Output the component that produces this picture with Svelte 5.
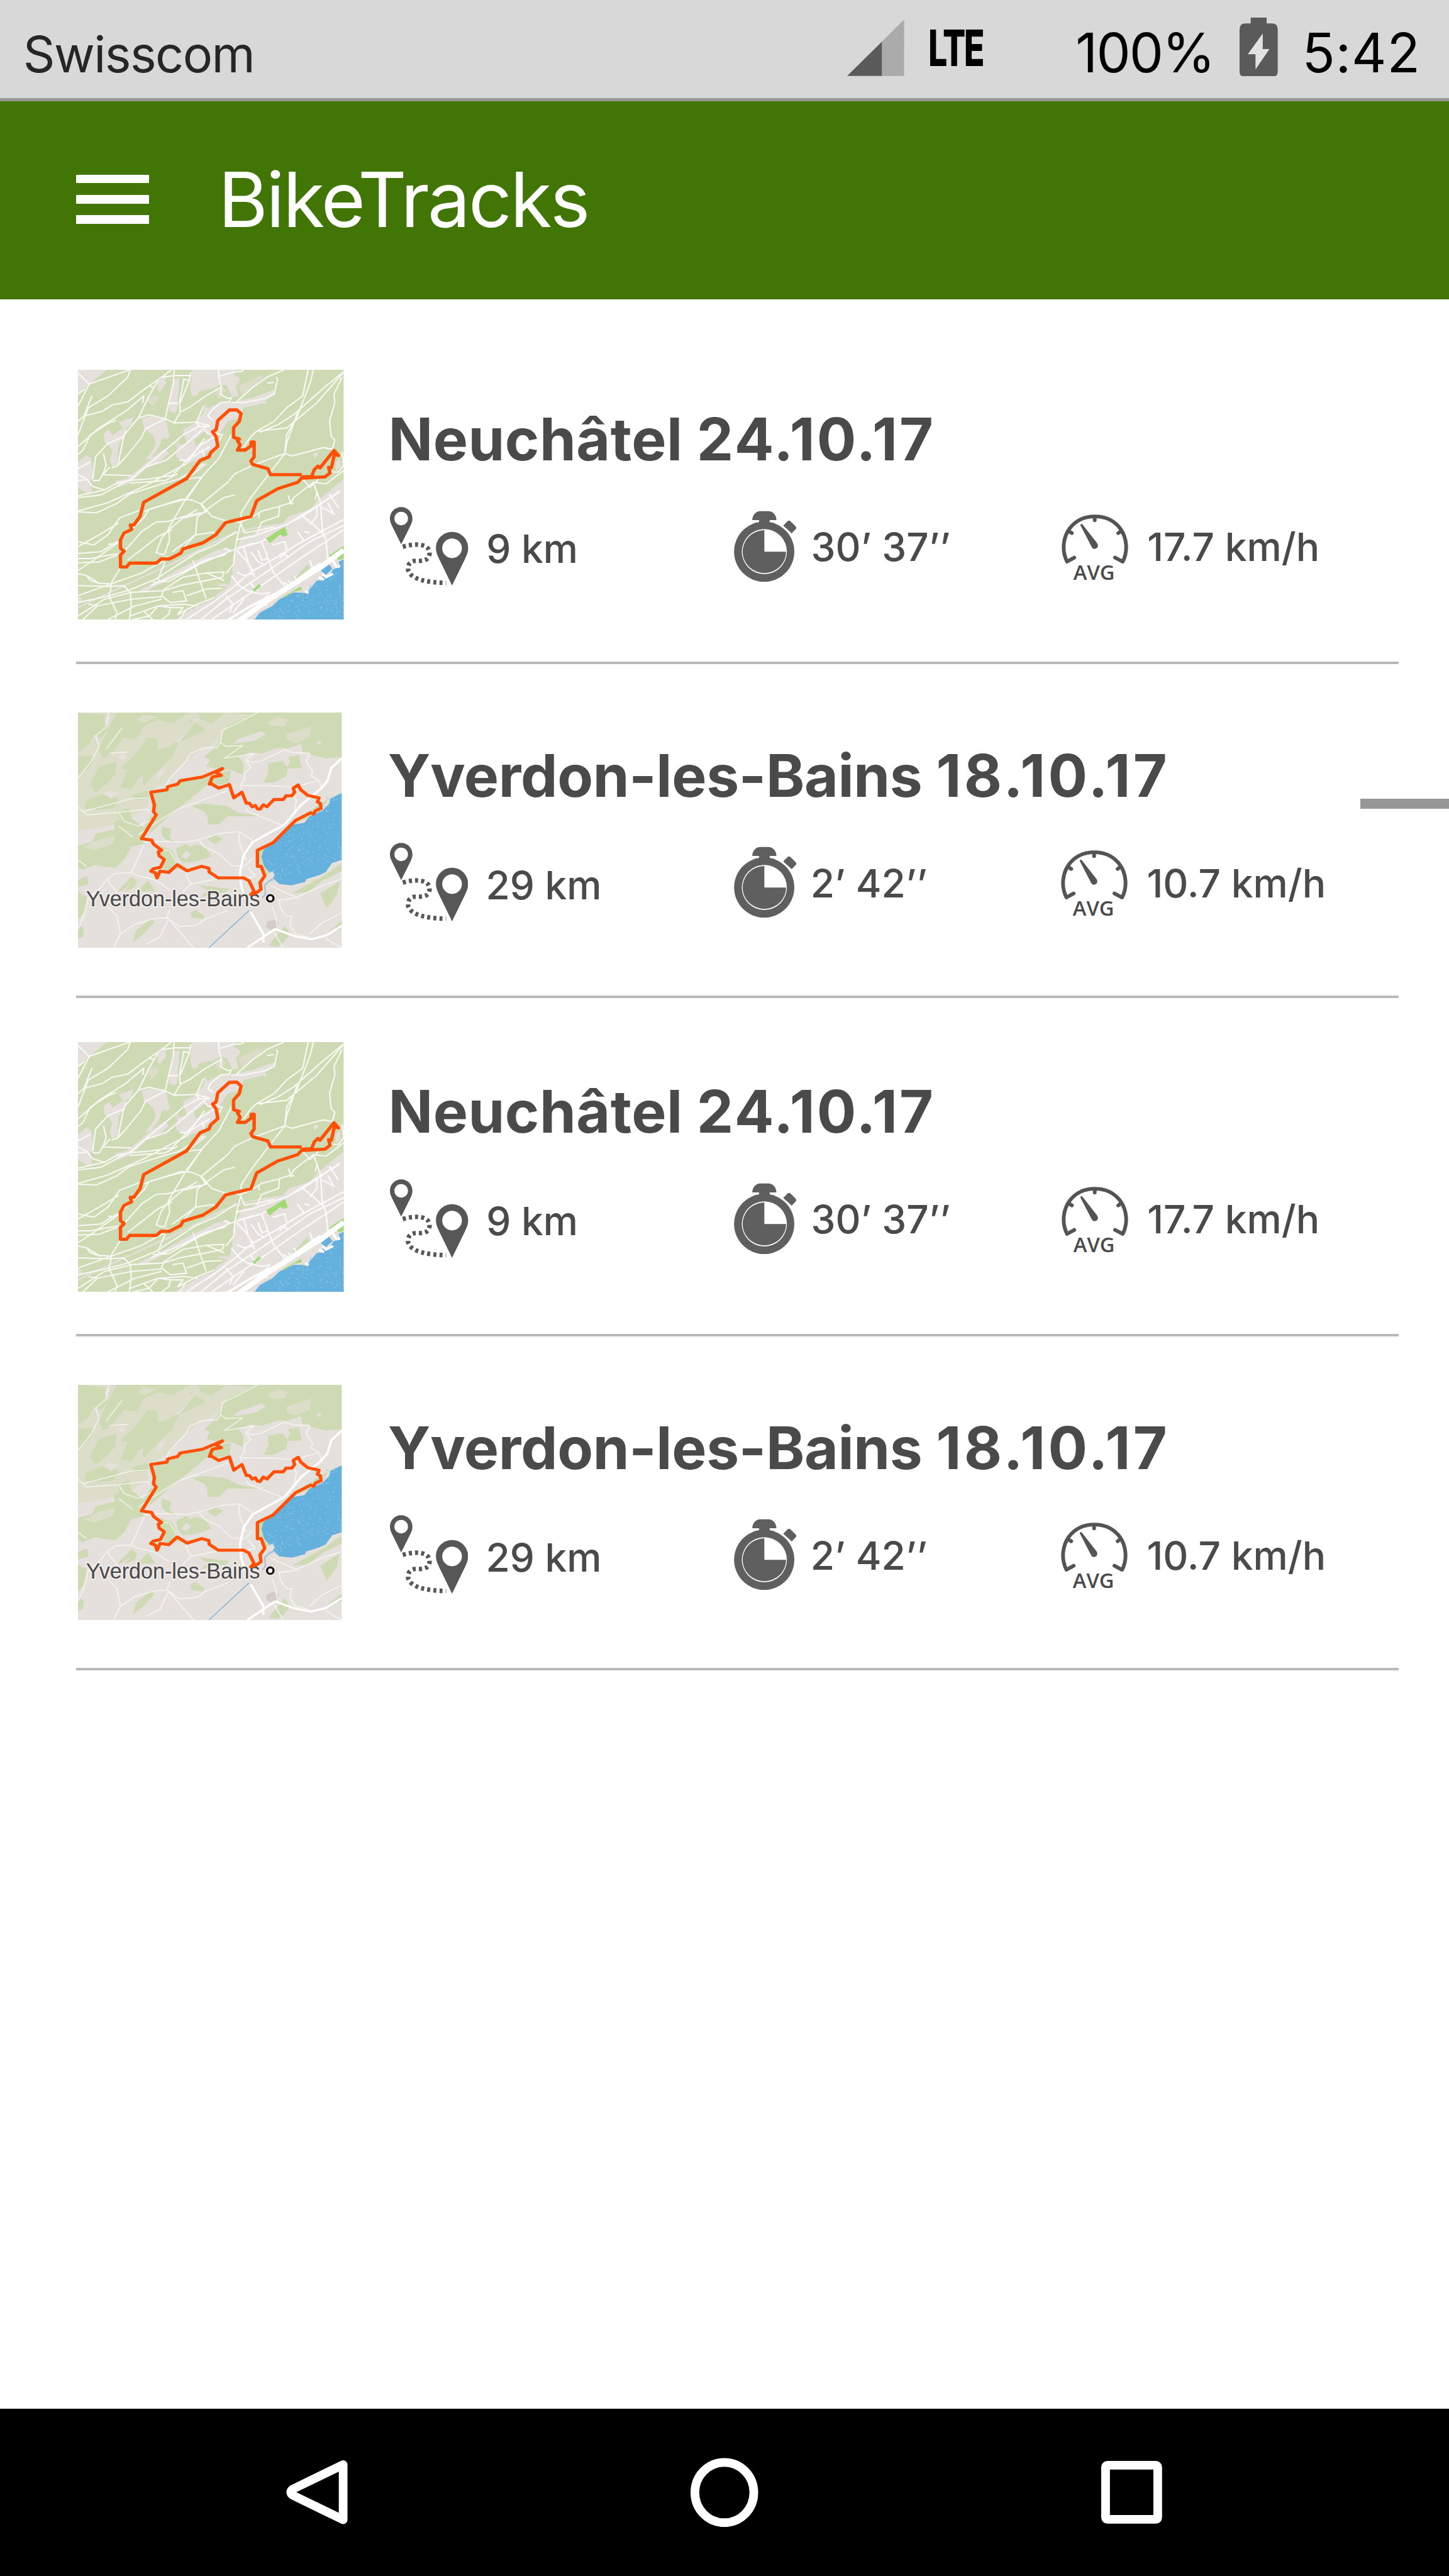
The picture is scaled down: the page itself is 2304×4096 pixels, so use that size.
<script>
  const neuchatel = { place: 'Neuchâtel', date: '24.10.17', distance: '9 km', time: '30’ 37’’', speed: '17.7 km/h', map: 'hills' };
  const yverdon = { place: 'Yverdon-les-Bains', date: '18.10.17', distance: '29 km', time: '2’ 42’’', speed: '10.7 km/h', map: 'lake' };
  const tracks = [neuchatel, yverdon, neuchatel, yverdon];

  // Light speckles scattered over the lakes
  const noise = (i) => {
    const v = Math.sin(i * 127.1 + 11.7) * 43758.5453;
    return v - Math.floor(v);
  };
  const specks = (x0, y0, w, h, n) =>
    Array.from({ length: n }, (_, i) => ({ x: x0 + noise(i) * w, y: y0 + noise(i + 500) * h }));
  const bay = specks(1040, 1170, 480, 350, 220);
  const lake = specks(1060, 560, 450, 560, 300);
</script>

{#snippet hillsMap()}
  <svg class="map" viewBox="32 46 1487 1474" preserveAspectRatio="none" aria-hidden="true">
    <rect x="32" y="46" width="1487" height="1474" fill="#cddab3" />
    <g fill="#e5e0dc">
      <path d="M32 46H195L95 130 32 190Z" />
      <path d="M672 46H915L905 75 940 95 930 130 915 135 932 205 895 205 865 140 830 130 800 150 705 175 700 200 670 200 660 150Z" />
      <path d="M575 95 600 100 585 290 570 300 540 290 548 200Z" />
      <path d="M745 235 755 275 830 240 900 235 1010 210 1130 165 1140 185 1080 225 1090 250 1060 245 960 270 940 330 870 350 820 430 800 500 700 580 640 600 580 560 590 490 640 480 620 400 690 360 735 300Z" />
      <path d="M390 335 440 320 525 340 545 440 500 470 480 510 440 570 405 580 450 520 470 480 450 430 400 390Z" />
      <path d="M262 355 340 325 330 370 290 400 290 440 260 480 250 600 225 620 210 580 225 520 180 470 175 425 205 400 225 435 262 405 285 390Z" />
      <path d="M32 590 80 548 108 570 118 690 100 700 110 765 90 780 32 740Z" />
      <path d="M520 510 540 540 500 580 420 620 350 690 320 715 255 740 245 700 300 690 350 650 440 570Z" />
      <path d="M1519 690 1440 760 1370 820 1330 870 1210 910 1180 950 1090 965 1000 1020 950 1030 900 1150 895 1260 880 1310 820 1310 800 1400 700 1440 580 1520H1519Z" />
      <path d="M860 1095 885 1110 840 1140 740 1185 600 1250 440 1340 400 1360 370 1350 500 1280 620 1210 790 1120Z" />
      <path d="M32 1385 55 1390 50 1420 32 1425ZM480 110 520 90 525 130 490 175 475 160ZM1345 550l20-20 12 15-18 22ZM1475 590 1500 570 1500 620 1475 645Z" />
    </g>
    <g fill="#dcdcc8">
      <path d="M930 140 1050 80 1070 90 1010 155 950 200ZM420 215 470 195 485 220 450 260 425 240ZM800 170l40-30 20 30-40 50Z" />
      <path d="M570 480 600 455 590 510Z" />
    </g>
    <g fill="#cddab3">
      <path d="M682 460 740 410 775 440 690 500ZM495 465 515 440 525 470 505 485ZM1235 1290 1320 1190 1330 1225 1270 1290ZM820 1320 870 1330 780 1390 700 1440 640 1430Z" />
    </g>
    <path fill="none" stroke="#e5e0dc" stroke-width="9" d="M32 1450 230 1350 560 1190 860 1030 1000 985 1100 965" />
    <path fill="#64b1de" d="M1519 1165 1490 1180 1500 1205 1460 1225 1440 1262 1400 1265 1405 1290 1370 1290 1325 1345 1320 1365 1240 1360 1160 1400 1120 1440 1050 1480 1020 1520H1519ZM1392 1232 1438 1195 1457 1220 1420 1256Z" />
    {#each bay as p}
      {#if p.x + p.y * 1.25 > 2980}<circle cx={p.x} cy={p.y} r="3.5" fill="#8cc5e8" />{/if}
    {/each}
    <g class="roads" stroke-width="8">
      <path d="M32 65 95 130 320 46M95 130 32 260M32 190 70 160M325 46 310 90 200 200 90 270 32 430" />
      <path d="M32 350 65 320 170 290 220 255 310 235 430 140 500 90 575 80 665 80M65 320 110 200M32 545 60 520 100 430 205 360 245 345M430 140 455 150M480 110 430 200 370 330 290 430 255 610 220 625M555 46 500 90" />
      <path d="M32 500 150 390 300 290 400 200 395 240M32 630 100 590M570 46 565 130 540 240 520 335 570 360 690 355 765 375M540 243H592M625 100 600 240 605 295 570 360M665 60 655 110 605 240M605 295 660 265 740 205 830 150M655 110 620 100" />
      <path d="M820 46 820 90 835 150 830 190 870 215 890 210 880 235 830 240 775 290 760 320 790 345M820 85 900 60 950 55 960 46M890 240 960 240 1080 215 1130 190 1150 100 1140 90M920 235 1010 150 1090 90 1185 46M1090 125 1130 120" />
      <path d="M370 330 430 312 520 335 410 395 385 450 300 560 255 610 240 620M300 400 290 440 200 480 130 560 115 690M175 540 190 610 170 665 330 670M170 665 210 620" />
      <path d="M32 665 80 690 115 735 180 755 32 790M115 700 150 700 170 665M32 700 75 695M180 755 250 715 320 700 410 620 525 580 640 480 750 380" />
      <path d="M32 885 135 890 250 835 320 780 500 720 600 690 735 600M32 800 160 785 310 700 430 690 560 670 640 580 770 500M320 715 520 700 590 660M32 880 200 830 400 735 640 600 740 450" />
      <path d="M735 260 695 355 710 380 620 430 500 540 430 600 320 700M710 380 770 380M740 400 760 425 785 420M780 420 840 430 820 470M890 430 820 570 740 660 640 800 540 980 545 1050 515 1140 470 1125 500 1040 540 990" />
      <path d="M725 510 740 560M600 580 640 580 720 490 800 440M400 830 640 690 750 600M400 885 430 870 560 830 640 810 725 680 640 690" />
      <path d="M1519 60 1370 240 1200 390 1030 410 1000 440 960 500M1030 410 1130 350 1200 270 1290 200 1310 100 1320 46M1350 46 1330 130 1270 290 1260 320 1200 430 1190 540 1110 570 1000 615 910 660 870 710 720 840M1515 60 1400 160 1240 310 1150 370 1050 415" />
      <path d="M1510 90 1465 190 1470 240 1440 350 1450 440 1470 460 1455 515 1405 505 1230 555 1190 540 1080 690 1000 800 945 890 945 940M1190 540 1200 480 1260 300" />
      <path d="M1510 530 1519 610 1490 650 1450 650M1519 640 1420 720 1350 710 1240 800 1225 830 1150 855 1060 880 1000 920 940 945 850 935 780 910 725 840 670 815 610 810 430 870 400 920 250 1070 120 1170 32 1230" />
      <path d="M1290 690 1330 740 1380 690M1350 710 1370 770 1360 810M1210 790 1225 840 1240 830M1160 855 1155 910 1060 945 1035 1010M1045 890 1045 920M910 785 850 800 780 850 700 915 690 1020 560 1120" />
      <path d="M32 1060 120 1080 200 1020 265 920 390 870M32 1090 150 1020 260 950M32 1130 160 1120 250 1060M32 1160 100 1160 260 1130M720 840 750 885 630 920M32 1185 150 1180 250 1140M200 1075 245 1075M540 990 620 920 700 870" />
      <path d="M280 1130 390 1000 470 945 540 940 630 910 720 890M310 1170 480 1030 560 990M690 1020 790 1005 800 1020M690 1020 610 1110M945 945 925 1030 910 1110 905 1190 860 1250M940 945 965 1010 1060 990 1130 975" />
      <path d="M270 1215 220 1300 215 1345 205 1380 250 1480 240 1520M32 1250 80 1260 150 1305 220 1310M80 1260 100 1290 160 1310M32 1320 215 1325 290 1320 325 1360 330 1430 320 1520M32 1420 205 1380 310 1350 470 1280 690 1130 800 1080 920 1000M32 1380 215 1310 380 1250 520 1170 530 1145" />
      <path d="M675 1170 750 1400M440 1320 620 1240 740 1170 850 1140 880 1110 850 1100M490 1290 480 1280 520 1180M450 1300 540 1295 720 1190 920 1100 1015 1070M510 1345 620 1270 750 1245 850 1240 840 1270 750 1290 600 1320 510 1350 500 1380 550 1420 640 1410 620 1350 560 1360M640 1380 750 1340 840 1335" />
      <path d="M32 1500 180 1400 330 1360 510 1350M60 1520 140 1440 330 1400 500 1385M140 1440 90 1430M200 1520 350 1440 500 1400M320 1500 480 1440 620 1430 700 1440M340 1520 430 1500 480 1440 550 1450 540 1490 500 1520M400 1470 450 1520M550 1450 620 1450 590 1490 700 1430 800 1390M600 1520 640 1460M750 1245 850 1290" />
    </g>
    <g class="roads" stroke-width="9">
      <path d="M640 1520 800 1410 900 1330 1000 1240 1150 1150 1270 1070 1519 930M720 1520 860 1400 960 1330 1100 1230 1330 1060 1519 965M780 1520 920 1420 1100 1290 1290 1150 1420 1060 1519 990" />
      <path d="M915 1050 1010 1030 1090 1000 1200 960 1290 900 1370 850 1500 760M930 1100 960 1090 1060 1060 1085 1045M1205 955 1290 910 1430 810 1495 770M920 1110 980 1180 1010 1240 1020 1270M960 1090 985 1190 1010 1230M1060 1060 1125 1240 1200 1340M890 1260 935 1320 980 1350 1060 1370 1110 1360" />
      <path d="M1370 770 1390 830 1400 1000 1420 1050 1430 1160M1290 910 1350 960 1400 1010M1370 850 1370 910 1330 960M1000 1120 1040 1180 1080 1200M1040 1110 1060 1170 1100 1160M1120 1080 1190 1060 1200 1110M1160 1130 1220 1150M1160 1160 1200 1120M1260 1000 1300 1060M1300 1000 1330 1010M860 1380 900 1430 880 1480M920 1240 960 1260 1010 1250M990 1300 1040 1350M1180 1300 1230 1330M1210 1290 1240 1320M1240 1260 1270 1310M1040 1430 1100 1370M900 1480 960 1400M1400 860 1470 900M1430 830 1460 890M1440 780 1490 860M1330 1170 1350 1230M1060 1410 1090 1440" />
    </g>
    <path fill="#a3d977" d="M1085 1040 1190 972 1207 1022 1180 1030 1165 1018 1105 1070ZM1010 1345 1045 1310 1057 1322 1018 1357ZM1440 1140 1519 1085V1160L1490 1170 1475 1150 1440 1150ZM1180 1385 1280 1325 1285 1345 1240 1355 1190 1390ZM1062 1405l14-8 6 9-14 8Z" />
    <g class="roads strong">
      <path stroke-width="30" d="M930 1530 1090 1410 1240 1310 1390 1210 1519 1110" />
      <path stroke-width="14" d="M860 1530 1000 1440 1190 1340 1330 1230 1390 1190M1400 1250 1420 1270 1460 1250M1305 1350 1320 1365M1380 1270 1410 1285M1450 1160 1480 1210 1500 1205" />
    </g>
    <path class="route" stroke-width="19" d="M1285 665H1110L1095 630 1010 605 1000 585 1018 560V472H1002L1000 495 968 520H925L940 490 925 465 935 455 903 445V388L935 350 945 305 922 283H880L815 345 805 400 785 412 805 440 815 497 775 535 765 560 715 582 640 688 400 828 380 910 345 962H325L332 988 290 1010 270 1050V1100L290 1117 270 1140V1210H303L322 1187H470L497 1163H543L608 1128 620 1103 730 1068 803 1020 858 948 1000 912 1033 818 1150 748 1262 710 1290 678 1340 675 1355 635 1375 615 1387 625 1465 522 1490 552 1468 545 1450 625 1435 622 1443 655 1415 678 1290 685" />
  </svg>
{/snippet}

{#snippet lakeMap()}
  <svg class="map" viewBox="32 45 1477 1461" preserveAspectRatio="none" aria-hidden="true">
    <rect x="32" y="45" width="1477" height="1461" fill="#e5e0dc" />
    <path fill="#dcdec9" d="M32 45H1100L900 130 800 230 700 290 600 380 540 470 440 530 420 640 300 720 150 760 32 780Z" />
    <g fill="#cddab3">
      <path d="M880 45H1509V320L1420 330 1290 290 1280 240 1200 270 1150 265 1060 300 1000 290 930 320 960 360 955 430 890 400 830 400 750 380 770 340 740 320 800 260 830 200 870 130 1000 60Z" />
      <path d="M32 45 180 60 200 150 160 200 120 180 90 250 32 290ZM250 45H660L560 110 480 90 400 130 360 210 290 200 220 300 170 330 150 270 190 170ZM660 90 750 150 680 190 600 230 560 320 470 420 400 500 380 440 330 520 270 510 310 400 270 390 350 310 420 200 520 210 620 160ZM32 320 120 310 110 370 60 420 32 440ZM150 380 250 350 240 430 180 500 130 540 100 490ZM80 590 190 540 260 580 230 640 130 650 70 640ZM330 560 420 530 430 580 360 590ZM250 660 320 640 330 700 270 720ZM700 45 860 50 780 110 720 90Z" />
      <path d="M230 730 320 690 400 760 430 700 450 680 440 760 390 830 400 860 330 880 290 960 240 1010 170 1000 130 990 60 1020 32 1010V870L110 850 130 800 240 770Z" />
      <path d="M770 480 640 600 540 690 430 800 460 700 450 640 440 540 530 520 610 470 740 450 770 440 890 400 880 480 800 500Z" />
      <path d="M670 625 740 610 860 625 930 665 1050 690 870 690 820 740 760 740 755 690 740 660ZM500 750 555 770 545 820 575 855 520 830 500 800ZM580 890 640 860 660 880 690 865 745 880 780 940 700 970 620 980 590 940ZM755 830 800 805 845 828 800 862ZM1095 360 1180 345 1205 390 1200 440 1130 480 1070 480 1100 420ZM1210 320 1270 310 1285 390 1200 395 1220 350ZM490 870 560 900 590 980 650 1010 510 1030 520 960 490 920Z" />
      <path d="M250 1160 330 1065 362 1090 350 1130 290 1160 330 1110 280 1150ZM365 1155 425 1085 465 1155ZM340 1470 355 1400 440 1325 460 1345 400 1420ZM660 1290 690 1270 740 1310 735 1325 670 1320ZM32 1085 85 1060 90 1110 32 1130ZM32 1160 80 1190 70 1280 32 1330ZM705 1115 880 1140 860 1160 720 1190 760 1150ZM32 1370 65 1380 60 1440 32 1450Z" />
      <path d="M1509 980 1420 1050 1290 1130 1230 1170 1320 1160 1400 1090 1509 1030ZM1390 1170 1430 1140 1500 1090 1480 1180 1425 1260ZM1509 1340 1430 1410 1509 1390ZM1190 1370 1220 1420 1180 1480 1150 1500 1100 1490ZM1509 530 1430 590 1390 650 1350 690 1250 730 1180 830 1070 910 1060 950 1090 1020 1130 1040 1090 1060 1060 1020 1035 990V900L1130 850 1250 710Z" />
    </g>
    <g fill="#e5e0dc">
      <path d="M560 230 720 60 640 170 600 230ZM930 210 1060 160 1085 180 1020 220 900 240ZM180 90 210 60 200 140ZM250 320 300 290 290 350ZM170 550 210 530 260 540 220 580ZM1365 235 1390 218 1395 232 1375 245ZM380 460 400 430 390 480ZM610 940 640 900 665 925 640 955ZM1290 340 1330 300 1340 350 1290 380ZM470 420 530 380 480 470Z" />
    </g>
    <g fill="#dcdec9">
      <path d="M1200 180 1340 130 1330 200 1250 235 1200 215ZM1090 110 1150 70 1210 90 1190 130 1120 130ZM60 880 160 830 240 810 230 860 120 900ZM480 200 620 90 680 110 610 200 540 260 480 280ZM360 90 400 60 480 70 400 110Z" />
    </g>
    <path fill="#64b1de" d="M1509 545 1445 580 1440 610 1400 655 1330 690 1300 730 1240 740 1070 900 1060 940 1075 1000 1105 1038 1130 1050 1125 1075 1160 1110 1230 1118 1310 1095 1420 1035 1455 980 1509 960Z" />
    <g fill="#8cc5e8">
      {#each lake as p}
        {#if p.x + p.y > 2000 && p.y < 1580 - p.x * 0.42}<circle cx={p.x} cy={p.y} r="3.5" />{/if}
      {/each}
    </g>
    <path fill="#e5e0dc" d="M1085 1055 1120 1030 1135 1055 1120 1075ZM1310 1080 1440 1035 1509 970V985L1300 1110Z" />
    <path fill="#d5cbc8" d="M1085 1380 1090 1345 1130 1330 1155 1350 1150 1380 1120 1400Z" />
    <g fill="none" stroke="#8fb9d6" stroke-width="6">
      <path d="M765 1506 990 1275M1065 1195 1082 1170 1078 1115 1125 1075" />
    </g>
    <g class="roads faint" stroke-width="7">
      <path d="M205 45 185 140 130 190 150 255 100 360 32 450M1040 45 900 125 840 155 830 230 810 262 735 265 660 300 635 350 540 460 530 500M830 230 860 255 955 250 850 330 1020 300 970 340 1010 355 1060 345 1190 275 1240 295 1330 297 1310 345 1320 370 1345 405 1340 440 1380 465 1395 510" />
      <path d="M970 340 1000 385 965 420 965 460 945 490 945 520M945 498 1130 500 1240 510 1380 465M510 700 600 640 700 600 870 530M60 660 180 625 330 580 430 575M32 630 80 680 260 665 420 645 430 660M260 665 290 720 370 750 440 715M370 805 510 700M400 850 480 845 640 850 710 835 830 795 935 785 1010 840M260 750 340 820M190 270 280 140M210 298 310 290" />
      <path d="M400 870 360 970 330 1040 240 1045 200 1075 160 1130 90 1200 60 1320 32 1390M200 1075 210 1110 260 1170M330 1040 370 1060 450 1080 500 1110 545 1150M545 1270 530 1320 600 1375 700 1365 740 1330 870 1275M530 1320 460 1325 350 1360 270 1420 230 1506M270 1420 250 1310 200 1250M540 1330 490 1440 420 1480M540 1330 680 1506M640 1030 640 1060 665 1110 620 1160M665 1110 850 1070M710 835 740 880 820 920 890 995 940 1000M935 785 935 850 975 960M975 640 985 660 1190 750M1240 560 1255 590 1245 660M940 1010 975 990 1010 950M985 1010 1025 1060 960 1080M1110 1120 1190 1160 1270 1200M1120 1250 1140 1320 1150 1390M1160 1210 1165 1260 1200 1310 1230 1310 1220 1370 1250 1420 1320 1440M1150 1210 1240 1200 1400 1120 1509 1080M1509 1290 1400 1350 1330 1420M545 900 585 980M500 900 540 900M32 960 80 1000M1180 1506 1120 1390M1420 1450 1509 1506" />
    </g>
    <g class="roads strong">
      <path stroke-width="13" d="M1509 330 1450 390 1430 470 1390 520 1280 620 1190 740 1010 850 960 930 940 1030 945 1120 980 1230" />
      <path stroke-width="13" d="M1000 1285 1070 1420 1070 1475M980 1506 1135 1390 1250 1435 1340 1453 1420 1430 1509 1370" />
    </g>
    <text class="town" x="77" y="1250" textLength="975" lengthAdjust="spacingAndGlyphs">Yverdon-les-Bains</text>
    <path class="route" stroke-width="19" d="M848 390 730 445 605 468 590 490 535 505 530 525 440 540 460 620 455 660 470 680 388 828 445 838 455 862 500 900 482 910 487 935 515 958 495 1005 455 1015 440 1030 465 1040 475 1072 492 1030 540 1038 588 990 643 1028 725 1000 765 1012 767 1035 818 1072H960L990 1090 1018 1155 1000 1175 1030 1165 1057 1143 1052 1100 1078 1060 1058 1000H1037V900L1125 853 1250 715 1335 668 1352 675 1362 655 1393 640 1390 610 1373 600 1382 575 1320 560 1280 525 1265 495 1238 515 1245 540 1230 562H1197L1182 585H1130L1090 630 1070 618 1052 645 1037 643 1025 622 1008 630 992 608H975L950 540 905 575 880 492 820 515 775 485 768 490 785 445 835 435 805 418 848 390" />
    <ellipse cx="1109" cy="1199" rx="18" ry="20" fill="#fff" stroke="#111" stroke-width="12" />
  </svg>
{/snippet}

{#snippet routeIcon()}
  <svg class="route-icon" viewBox="54 58 486 489" aria-hidden="true">
    <path fill="#575757" fill-rule="evenodd" d="M124 59C85 59 54 90 54 130 54 150 62 165 70 182L124 290 178 182C186 165 194 150 194 130 194 90 163 59 124 59ZM124 88A42 42 0 1 1 124 172 42 42 0 1 1 124 88ZM440 213C384 213 340 258 340 314 340 340 350 360 360 382L440 546 520 382C530 360 540 340 540 314 540 258 496 213 440 213ZM440 254A60 60 0 1 1 440 376 60 60 0 1 1 440 254Z" />
    <path fill="none" stroke="#575757" stroke-width="28" stroke-dasharray="19 19.4" d="M134 306C165 296 195 292 218 292 265 292 300 308 300 345 300 380 275 393 240 393H215C185 393 166 412 166 440 166 475 205 500 250 512 295 523 340 529 403 530" />
  </svg>
{/snippet}

{#snippet stopwatchIcon()}
  <svg class="stopwatch-icon" viewBox="60 58 390 489" aria-hidden="true">
    <g fill="#5f5f5f">
      <path d="M174 140C174 106 198 84 224 84H274C300 84 324 106 324 140H282V170H216V140Z" />
      <circle cx="248" cy="336" r="187" />
      <path d="M366 174 395 145Q403 140 411 147L443 178Q449 185 446 194L419 222Z" />
    </g>
    <circle cx="249" cy="336" r="140" fill="#fff" />
    <path fill="#5f5f5f" d="M249 336V203A135 133 0 1 0 384 336Z" />
  </svg>
{/snippet}

{#snippet gaugeIcon()}
  <svg class="gauge-icon" viewBox="54 58 414 489" aria-hidden="true">
    <g fill="none" stroke="#545454" stroke-width="23" stroke-linecap="round" stroke-linejoin="round">
      <path d="M133 373 88 398C54 330 62 250 104 192 142 142 198 117 261 117S380 142 418 192C460 250 468 330 434 398L386 373" />
      <path d="M260 120V141M106 213 118 221M416 213 406 221" />
    </g>
    <path fill="#545454" d="M171 172C171 163 180 161 185 168L275 284C288 306 272 320 258 319 248 318 243 312 239 303Z" />
    <text x="256" y="510" text-anchor="middle">AVG</text>
  </svg>
{/snippet}

<div class="screen">
  <header class="status">
    <span class="carrier">Swisscom</span>
    <div class="indicators">
      <svg class="signal" viewBox="0 0 118 117" aria-hidden="true">
        <path fill="#aaa" d="M118 0V117H72V46Z" />
        <path fill="#5a5a5a" d="M0 117 72 46V117Z" />
      </svg>
      <span class="network">LTE</span>
      <span class="charge">100%</span>
      <svg class="battery" viewBox="0 0 79 122" aria-hidden="true">
        <path fill="#5a5a5a" d="M23 0H56V12H67Q79 12 79 24V112Q79 122 69 122H10Q0 122 0 112V24Q0 12 12 12H23Z" />
        <path fill="#e2e2e2" d="M48 33V65H62L33 107V76H17Z" />
      </svg>
      <span class="clock">5:42</span>
    </div>
  </header>

  <div class="appbar">
    <button class="menu" aria-label="Menu"><i></i><i></i><i></i></button>
    <h1>BikeTracks</h1>
  </div>

  <main>
    <ul class="tracks">
      {#each tracks as track}
        <li class={track.map}>
          {#if track.map === 'hills'}{@render hillsMap()}{:else}{@render lakeMap()}{/if}
          <div class="info">
            <h2><span class="place">{track.place}</span> <span class="date">{track.date}</span></h2>
            <div class="stats">
              <div class="stat distance">{@render routeIcon()}<span>{track.distance}</span></div>
              <div class="stat time">{@render stopwatchIcon()}<span>{track.time}</span></div>
              <div class="stat speed">{@render gaugeIcon()}<span>{track.speed}</span></div>
            </div>
          </div>
        </li>
      {/each}
    </ul>
    <div class="scroll-mark"></div>
  </main>

  <nav>
    <svg class="back" viewBox="0 0 128 140" aria-hidden="true">
      <path d="M118 13V127L13 76Q6 70 13 64Z" />
    </svg>
    <svg class="home" viewBox="0 0 140 144" aria-hidden="true">
      <ellipse cx="70" cy="72" rx="61" ry="62.5" />
    </svg>
    <svg class="recent" viewBox="0 0 126 130" aria-hidden="true">
      <rect x="9" y="9" width="108" height="112" rx="4" />
    </svg>
  </nav>
</div>

<style>
  :global(html) {
    font-size: 76.8px;
  }
  :global(body) {
    margin: 0;
    background: #fff;
  }
  .screen {
    position: relative;
    display: flex;
    flex-direction: column;
    width: 30rem;
    height: 4096px;
    overflow: hidden;
    background: #fff;
    color: #4a4a4a;
    font-family: Inter, Roboto, sans-serif;
  }
  svg {
    display: block;
    flex: none;
  }

  .status {
    box-sizing: border-box;
    display: flex;
    align-items: flex-end;
    justify-content: space-between;
    height: 2.09rem;
    padding: 0 0 0.445rem 0.48rem;
    background: #d8d8d8;
    border-bottom: 5px solid #979797;
    line-height: 1;
    white-space: nowrap;
  }
  .carrier {
    margin-bottom: -0.06rem;
    color: #262626;
    font-size: 1.03rem;
    letter-spacing: -0.02em;
  }
  .indicators {
    display: flex;
    align-items: flex-end;
    width: 12.46rem;
    color: #000;
  }
  .signal {
    width: 1.18rem;
    height: 1.17rem;
  }
  .network {
    width: 1.2rem;
    margin: 0 0 0.06rem 0.5rem;
    font-size: 1.045rem;
    font-weight: 850;
    letter-spacing: -0.05em;
    transform: scaleX(0.67);
    transform-origin: left;
  }
  .charge {
    width: 2.85rem;
    margin: 0 0 -0.07rem 1.85rem;
    font-size: 1.12rem;
    letter-spacing: -0.022em;
  }
  .battery {
    width: 0.79rem;
    height: 1.22rem;
    margin-left: 0.55rem;
  }
  .clock {
    margin: 0 0 -0.07rem 0.5rem;
    font-size: 1.12rem;
    letter-spacing: 0.009em;
  }

  .appbar {
    display: flex;
    align-items: center;
    height: 4.11rem;
    padding-left: 1.58rem;
    background: #417505;
    color: #fff;
  }
  .menu {
    display: flex;
    flex-direction: column;
    justify-content: space-between;
    width: 1.51rem;
    height: 1.01rem;
    margin: 0 1.43rem 0.04rem 0;
    padding: 0;
    border: 0;
    background: none;
  }
  .menu i {
    height: 0.175rem;
    background: #fff;
  }
  h1 {
    margin: 0;
    font-size: 1.57rem;
    font-weight: 370;
    letter-spacing: -0.022em;
    line-height: 1.21;
  }

  main {
    flex: 1;
    padding: 0.55rem 1.04rem 0 1.57rem;
  }
  .tracks {
    margin: 0;
    padding: 0;
    list-style: none;
  }
  li {
    box-sizing: border-box;
    display: flex;
    align-items: flex-start;
    padding-left: 0.05rem;
    border-bottom: 4px solid #b9b9b9;
  }
  .hills {
    height: 7rem;
  }
  .lake {
    height: 6.92rem;
  }
  .map {
    width: 5.5rem;
    height: 5.17rem;
    margin-top: 0.91rem;
  }
  .lake .map {
    width: 5.46rem;
    height: 4.87rem;
    margin-top: 1rem;
  }
  .roads {
    fill: none;
    stroke: #fff;
    stroke-linejoin: round;
    opacity: 0.82;
  }
  .roads.faint {
    opacity: 0.6;
  }
  .roads.strong {
    opacity: 1;
  }
  .route {
    fill: none;
    stroke: #ff5008;
    stroke-linejoin: round;
  }
  .town {
    font: 138px 'Liberation Sans', Arial, sans-serif;
    fill: #484848;
    stroke: rgba(240, 238, 235, 0.8);
    stroke-width: 18;
    stroke-linejoin: round;
    paint-order: stroke;
  }

  .info {
    margin: 1.6rem 0 0 0.92rem;
  }
  .lake .info {
    margin: 1.56rem 0 0 0.95rem;
  }
  h2 {
    margin: 0;
    font-size: 1.21rem;
    font-weight: 660;
    line-height: 1.5rem;
    white-space: nowrap;
  }
  .place {
    letter-spacing: 0.005em;
  }
  .date {
    letter-spacing: 0.031em;
  }
  .lake .place {
    letter-spacing: -0.004em;
  }
  .lake .date {
    letter-spacing: 0.045em;
  }
  .stats {
    display: grid;
    grid-template-columns: 7.12rem 6.78rem auto;
    margin-top: 0.64rem;
    padding-left: 0.04rem;
    font-size: 0.81rem;
    font-weight: 500;
    line-height: 1rem;
    white-space: nowrap;
  }
  .stat {
    display: flex;
  }
  .stat span {
    margin-top: 0.345rem;
  }
  .distance span {
    margin: 0.385rem 0 0 0.37rem;
  }
  .time span {
    margin-left: 0.29rem;
  }
  .speed span {
    margin-left: 0.395rem;
  }
  .route-icon {
    width: 1.62rem;
    height: 1.63rem;
  }
  .stopwatch-icon {
    width: 1.3rem;
    height: 1.63rem;
  }
  .gauge-icon {
    width: 1.38rem;
    height: 1.63rem;
  }
  .gauge-icon text {
    fill: #4a4a4a;
    font: 600 128px 'Open Sans', sans-serif;
  }

  .scroll-mark {
    position: absolute;
    top: 16.53rem;
    right: 0;
    width: 1.84rem;
    height: 0.22rem;
    background: #979797;
  }

  nav {
    box-sizing: border-box;
    display: flex;
    align-items: center;
    justify-content: space-between;
    height: 3.463rem;
    padding: 0 5.94rem 0 5.92rem;
    background: #000;
  }
  nav svg {
    fill: none;
    stroke: #fff;
    stroke-width: 18;
    stroke-linejoin: round;
  }
  .back {
    width: 1.28rem;
    height: 1.4rem;
  }
  .home {
    width: 1.4rem;
    height: 1.44rem;
  }
  .recent {
    width: 1.26rem;
    height: 1.3rem;
  }
</style>
